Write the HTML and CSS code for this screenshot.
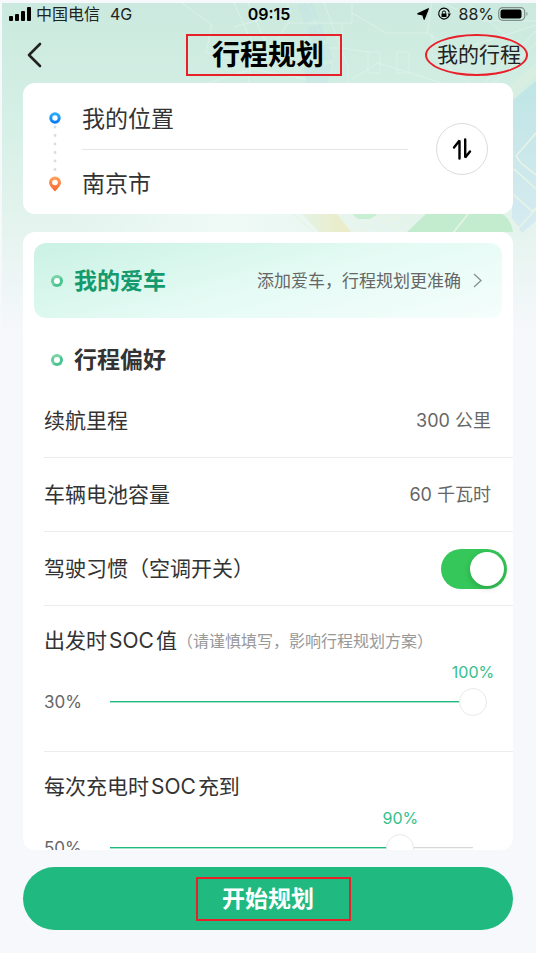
FILE: index.html
```html
<!DOCTYPE html>
<html lang="zh-CN">
<head>
<meta charset="utf-8">
<meta name="viewport" content="width=device-width, initial-scale=1">
<title>行程规划</title>
<link rel="stylesheet" href="styles.css">
</head>
<body>
<div class="page">
  <svg class="map" viewBox="0 0 534 330" preserveAspectRatio="xMaxYMin slice" aria-hidden="true">
    <defs>
      <linearGradient id="sky" x1="0" y1="0" x2="0" y2="1">
        <stop offset="0" stop-color="#cbe9de"/>
        <stop offset=".35" stop-color="#d5f0e6"/>
        <stop offset=".65" stop-color="#e3f3ed"/>
        <stop offset="1" stop-color="#f6f8fb"/>
      </linearGradient>
      <linearGradient id="water" x1="0" y1="0" x2="0" y2="1">
        <stop offset="0" stop-color="#bfe5e5"/>
        <stop offset="1" stop-color="#d6ebf1"/>
      </linearGradient>
      <linearGradient id="glow" x1="0" y1="0" x2="1" y2="0">
        <stop offset="0" stop-color="#eefaf6" stop-opacity="0"/>
        <stop offset=".5" stop-color="#effaf7"/>
        <stop offset="1" stop-color="#effaf7" stop-opacity="0"/>
      </linearGradient>
      <linearGradient id="sand" x1="0" y1="0" x2="1" y2="0">
        <stop offset="0" stop-color="#e4f3e4"/>
        <stop offset="1" stop-color="#ecebc4"/>
      </linearGradient>
    </defs>
    <rect width="534" height="330" fill="url(#sky)"/>
    <rect x="60" y="205" width="330" height="30" fill="url(#glow)"/>
    <path d="M534 78L510 98V215L520 230L534 218Z" fill="url(#water)"/>
    <path d="M534 60L500 90V105L534 72Z" fill="#d8eee1"/>
    <path d="M300 211H335L349 229H317Z" fill="url(#sand)"/>
    <path d="M350 211H376L368 216H356Z" fill="#c8efd2"/>
    <path d="M424 211H500Q509 216 511 229H405Z" fill="#c3ecce"/>
    <g fill="none" stroke="#e8f4e6" stroke-width="1.5">
      <path d="M534 130L514 153L519 160L534 172M512 166L534 186M512 192L530 208L534 205M534 206L512 230M503 211L516 224M466 211L451 230"/>
      <path d="M291 211L313 230M338 211L352 228Q360 229 370 223L398 211M346 211L356 222L384 211M378 229Q384 214 412 211M392 229Q396 217 423 211M375 211L400 229M386 211L407 225"/>
    </g>
    <g fill="none" stroke="#dff3eb" stroke-width="1" opacity=".8">
      <path d="M286 0V20H350V0M286 20L270 45H340V20M350 10L384 30H425L430 0M425 30L454 48L534 22M366 49H378V70H366ZM395 49H407V70H395ZM340 45L366 49M350 76L376 60L440 80M306 0L330 62L325 82M322 0L346 64V82M232 0L252 44L246 80M246 0L264 40M200 82L250 66L325 80M232 24L290 8M180 0L210 22L204 50L250 60M440 0L482 18H534M466 0L510 38M430 30V52L470 82M480 82L534 28M490 82L534 40"/>
    </g>
    <g fill="#c5e5e4" opacity=".6">
      <path d="M296 2L310 0L316 16L302 20ZM305 24L319 21L324 37L310 40ZM312 44L326 41L330 56L316 59ZM302 64L330 61L326 80L304 80Z"/>
    </g>
  </svg>

  <div class="status">
    <div class="status-side">
      <svg class="bars" viewBox="0 0 23 14" aria-hidden="true">
        <rect x="0" y="9" width="4" height="5" rx="1"/><rect x="6" y="7" width="4" height="7" rx="1"/><rect x="12" y="4" width="4" height="10" rx="1"/><rect x="18" y="0" width="4" height="14" rx="1"/>
      </svg>
      <span>中国电信</span>
      <span class="network">4G</span>
    </div>
    <time class="clock">09:15</time>
    <div class="status-side status-end">
      <svg class="locate" viewBox="0 0 12 12" aria-hidden="true"><path d="M11.300 .700L7.200 11.300L5.800 6.800L.700 5.800Z" stroke="#000" stroke-width="1.200" stroke-linejoin="round"/></svg>
      <svg class="lock" viewBox="0 0 14 14" aria-hidden="true">
        <path d="M11.4 3.4A5.4 5.4 0 1 0 12.4 7.4" fill="none" stroke="#000" stroke-width="1.2"/>
        <path d="M10.6 6.4H14L12.3 9Z"/><rect x="4.5" y="6.5" width="5" height="3.6" rx=".5"/>
        <path d="M5.4 6.8V5.5A1.6 1.6 0 0 1 8.6 5.5V6.8" fill="none" stroke="#000"/>
        <path d="M11.2 3.1L12.3 5.6" stroke="#000" stroke-width="1.2"/>
      </svg>
      <span>88%</span>
      <svg class="battery" viewBox="0 0 31 14" aria-hidden="true">
        <rect x=".7" y=".7" width="26" height="12.6" rx="4" fill="none" stroke="#7e9089" stroke-width="1.2"/>
        <rect x="2.5" y="2.5" width="21" height="9" rx="2.2"/><path d="M28.5 4.8Q30.5 7 28.5 9.2Z" fill="#7e9089"/>
      </svg>
    </div>
  </div>

  <header class="header">
    <button class="back" type="button" aria-label="返回">
      <svg viewBox="0 0 16 26" aria-hidden="true"><path d="M13 2L2 13L13 24" fill="none" stroke="#222" stroke-width="2.6" stroke-linecap="round" stroke-linejoin="round"/></svg>
    </button>
    <h1 class="title marked">行程规划</h1>
    <a class="trips marked" href="#trips">我的行程</a>
  </header>

  <main class="main">
    <section class="card route">
      <svg class="route-line" viewBox="0 0 14 80" aria-hidden="true">
        <defs>
          <linearGradient id="blue" x1="0" y1="0" x2="0" y2="1"><stop offset="0" stop-color="#27aefa"/><stop offset="1" stop-color="#087cf8"/></linearGradient>
          <linearGradient id="orange" x1="0" y1="0" x2="0" y2="1"><stop offset="0" stop-color="#ffa45c"/><stop offset="1" stop-color="#f8652f"/></linearGradient>
        </defs>
        <circle cx="7" cy="6" r="4.2" fill="none" stroke="url(#blue)" stroke-width="3"/>
        <g fill="#dcdcdf"><circle cx="7" cy="15" r="1.4"/><circle cx="7" cy="23.500" r="1.4"/><circle cx="7" cy="32" r="1.4"/><circle cx="7" cy="40.500" r="1.4"/><circle cx="7" cy="49" r="1.4"/><circle cx="7" cy="57.500" r="1.4"/></g>
        <path fill="url(#orange)" fill-rule="evenodd" d="M7 64.500A6 6 0 0 1 13 70.500C13 73.500 9.500 76.500 7 79.500C4.500 76.500 1 73.500 1 70.500A6 6 0 0 1 7 64.500ZM7 67.700A2.800 2.800 0 1 0 7 73.300A2.800 2.800 0 1 0 7 67.700Z"/>
      </svg>
      <div class="places">
        <button class="place" type="button">我的位置</button>
        <button class="place" type="button">南京市</button>
      </div>
      <button class="swap" type="button" aria-label="交换起点和终点">
        <svg viewBox="0 0 20 22" aria-hidden="true"><path d="M2 9.500L7.500 2.500V20.500M13.200 1.500V19.500L18 13.500" fill="none" stroke="#000" stroke-width="2.400" stroke-linejoin="bevel" stroke-linecap="round"/></svg>
      </button>
    </section>

    <section class="card settings">
      <a class="car" href="#car">
        <span class="heading"><i class="ring"></i>我的爱车</span>
        <span class="car-hint">添加爱车，行程规划更准确
          <svg viewBox="0 0 9 15" aria-hidden="true"><path d="M1 1L8 7.500L1 14" fill="none" stroke="#8b9492" stroke-width="1.400"/></svg>
        </span>
      </a>
      <h2 class="heading prefs"><i class="ring"></i>行程偏好</h2>
      <div class="rows">
        <div class="row"><span>续航里程</span><span class="value">300 公里</span></div>
        <div class="row"><span>车辆电池容量</span><span class="value">60 千瓦时</span></div>
        <div class="row"><label for="ac">驾驶习惯（空调开关）</label><input class="switch" id="ac" type="checkbox" role="switch" checked></div>
        <div class="soc">
          <div class="soc-title"><label for="start-soc">出发时<span class="latin">SOC</span>值</label><small><span class="half">（</span>请谨慎填写，影响行程规划方案）</small></div>
          <div class="slider" style="--fill: 1">
            <span class="min">30%</span>
            <output class="current" for="start-soc">100%</output>
            <input class="range" id="start-soc" type="range" min="30" max="100" value="100">
          </div>
        </div>
        <div class="soc">
          <div class="soc-title"><label for="charge-soc">每次充电时<span class="latin">SOC</span>充到</label></div>
          <div class="slider" style="--fill: .8">
            <span class="min">50%</span>
            <output class="current" for="charge-soc">90%</output>
            <input class="range" id="charge-soc" type="range" min="50" max="100" value="90">
          </div>
        </div>
      </div>
    </section>
  </main>

  <footer class="footer">
    <button class="start" type="button"><span class="marked">开始规划</span></button>
  </footer>
</div>
</body>
</html>
```
FILE: styles.css
```css
* { box-sizing: border-box; }

body {
  margin: 0;
  background: #f6f8fb;
  color: #333;
  font-family: Inter, "Noto Sans CJK SC", sans-serif;
  font-size: 21px;
  line-height: 30px;
}

button, a, input {
  font: inherit;
  color: inherit;
  text-decoration: none;
}

button {
  padding: 0;
  border: 0;
  background: none;
  cursor: pointer;
}

svg { display: block; flex: none; }

.page {
  position: relative;
  display: flex;
  flex-direction: column;
  height: 100vh;
  padding-top: 3px;
}

.map {
  position: absolute;
  z-index: -1;
  inset: 3px 0 auto 2px;
  width: calc(100% - 2px);
  height: 330px;
}

/* Status bar */
.status {
  display: grid;
  grid-template-columns: 1fr auto 1fr;
  align-items: center;
  padding: 0 7px 0 9px;
  color: #000;
  font-size: 16px;
  line-height: 22px;
}

.status-side { display: flex; align-items: center; gap: 4px; }
.status-side span { color: #1c2421; }
.status-end { justify-content: flex-end; }
.network { margin-left: 6px; }
.clock { font-weight: 600; }
.bars { width: 23px; height: 14px; }
.locate { width: 12px; height: 12px; margin-right: 4px; }
.lock { width: 14px; height: 14px; margin-right: 3px; }
.battery { width: 31px; height: 14px; }

/* Header */
.header {
  display: grid;
  grid-template-columns: 1fr auto 1fr;
  align-items: center;
  padding: 9px 15px 7px;
  color: #000;
}

.back { display: flex; padding: 4px 8px 4px 12px; justify-self: start; }
.back svg { width: 16px; height: 26px; }
.title { margin: 0; font-size: 28px; line-height: 42px; font-weight: 700; }
.trips { justify-self: end; color: #222; }

/* Hand-marked outlines laid over the important controls */
.marked { position: relative; }
.marked::after {
  content: "";
  position: absolute;
  border: 2px solid #e8202a;
}
.title::after { inset: 0 -18px 0 -26px; }
.trips::after { inset: -6px -7px -6px -12px; border-radius: 50%; }
.start .marked::after { inset: -8px -37px -8px -26px; }

/* Cards */
.main {
  display: flex;
  flex: 1;
  flex-direction: column;
  gap: 18px;
  min-height: 0;
  padding: 0 23px;
}

.card { border-radius: 12px; background: #fff; }

.route {
  display: flex;
  align-items: center;
  padding: 0 25px;
}
.route-line { width: 14px; height: 80px; margin-top: 6px; }
.places { flex: 1; margin: 0 28px 0 20px; }
.place {
  display: block;
  width: 100%;
  padding: 16px 0 12px;
  font-size: 23px;
  line-height: 36px;
  text-align: left;
}
.place:first-child { padding: 18px 0 12px; border-bottom: 1px solid #e6e6e6; }
.swap {
  display: grid;
  place-items: center;
  width: 52px;
  height: 52px;
  border: 1px solid #dcdcdc;
  border-radius: 50%;
}
.swap svg { width: 20px; height: 22px; }

.settings {
  flex: 1;
  min-height: 0;
  overflow-y: auto;
  scrollbar-width: none;
  padding-top: 11px;
}

.car {
  display: flex;
  align-items: center;
  justify-content: space-between;
  margin: 0 11px;
  padding: 0 20px 0 17px;
  height: 75px;
  border-radius: 12px;
  background: linear-gradient(165deg, #caf2e4 0%, #e6fbf5 55%, #f5fefc 100%);
}
.heading {
  display: flex;
  align-items: center;
  gap: 11px;
  margin: 0;
  font-size: 23px;
  line-height: 34px;
  font-weight: 700;
}
.car .heading { color: #159a6e; }
.car-hint {
  display: flex;
  align-items: center;
  gap: 12px;
  color: #666;
  font-size: 17px;
}
.car-hint svg { width: 9px; height: 15px; }
.ring {
  width: 12px;
  height: 12px;
  border: 3px solid #4cc492;
  border-top-color: #74d3a4;
  border-left-color: #66cd9e;
  border-radius: 50%;
  background: #fff;
}
.prefs { padding: 25px 28px 7px; }

.rows { padding-left: 21px; }
.row {
  display: flex;
  align-items: center;
  justify-content: space-between;
  height: 74px;
  padding-right: 22px;
  border-bottom: 1px solid #ececee;
}
.row:has(.switch) { padding-right: 6px; }
.value { color: #666; font-size: 18px; }

.switch {
  appearance: none;
  width: 66px;
  height: 40px;
  margin: 0;
  padding: 3px;
  border-radius: 20px;
  background: #d8d8dc;
}
.switch::before {
  content: "";
  display: block;
  width: 34px;
  height: 34px;
  border-radius: 50%;
  background: #fff;
  box-shadow: 0 2px 6px rgba(0, 0, 0, .2);
}
.switch:checked { background: #35c759; }
.switch:checked::before { margin-left: auto; }

/* State-of-charge sliders */
.soc {
  padding: 20px 26px 35px 0;
  border-bottom: 1px solid #ececee;
}
.soc-title { display: flex; align-items: center; }
.soc-title small { margin-left: 8px; color: #999; font-size: 16px; }
.half { font-feature-settings: "halt"; }
.latin { margin: 0 2px; }
.slider {
  display: grid;
  grid-template-columns: 52px 1fr;
  grid-template-rows: 32px 28px;
  align-items: center;
}
.min {
  grid-area: 2 / 1;
  color: #666;
  font-size: 17px;
}
.current {
  display: flex;
  grid-area: 1 / 2;
  justify-content: center;
  width: 0;
  margin-left: calc(14px + (100% - 28px) * var(--fill));
  color: #35c08b;
  font-size: 16px;
}
.range {
  appearance: none;
  grid-area: 2 / 2;
  width: 100%;
  height: 28px;
  margin: 0;
  background-color: transparent;
  background-image: linear-gradient(#20ba81 50%, #a5e2cb 50%), linear-gradient(#d8d8d8 50%, #f4f4f4 50%);
  background-position: 14px 13px;
  background-repeat: no-repeat;
  background-size: calc((100% - 28px) * var(--fill)) 2px, calc(100% - 28px) 2px;
}
.range::-webkit-slider-thumb {
  appearance: none;
  width: 28px;
  height: 28px;
  border: 1px solid #e9e9e9;
  border-radius: 50%;
  background: #fff;
}

.footer { padding: 17px 23px 23px; }
.start {
  width: 100%;
  height: 63px;
  border-radius: 32px;
  background: #20ba81;
  color: #fff;
  font-size: 23px;
  font-weight: 600;
}
```
